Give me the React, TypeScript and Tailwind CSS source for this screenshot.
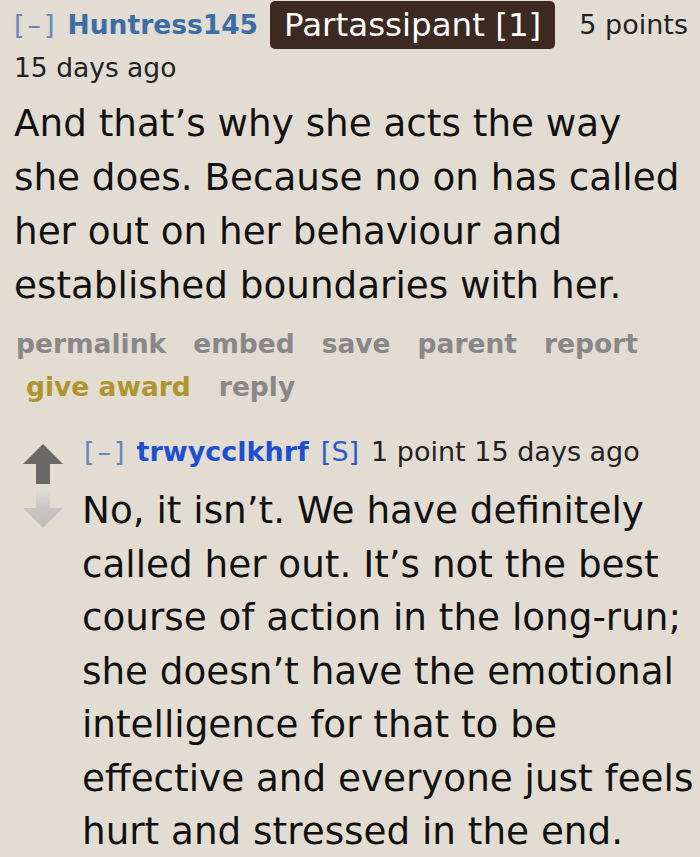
import React from 'react';

const font = { fontFamily: '"DejaVu Sans", "Liberation Sans", sans-serif' };

function UpArrow() {
  return (
    <svg width="42" height="40" viewBox="0 0 42 40">
      <polygon points="21,0 41,20 28,20 28,40 14,40 14,20 1,20" fill="#6b6966" />
    </svg>
  );
}

function DownArrow() {
  return (
    <svg width="42" height="40" viewBox="0 0 42 40">
      <defs>
        <linearGradient id="dg" x1="0" y1="0" x2="0" y2="1">
          <stop offset="0" stopColor="#e0dcd6" />
          <stop offset="0.45" stopColor="#c9c7c5" />
          <stop offset="1" stopColor="#bebcba" />
        </linearGradient>
      </defs>
      <polygon points="14,0 28,0 28,18 41,18 21,38 1,18 14,18" fill="url(#dg)" />
    </svg>
  );
}

export default function App() {
  return (
    <div className="w-[700px] h-[857px] overflow-hidden bg-[#e3dcd3] text-black" style={font}>
      {/* parent comment */}
      <div className="pl-[14px] pt-[1px]">
        <div className="flex items-center h-[48px] text-[27px] whitespace-nowrap">
          <span className="text-[#6389bb] tracking-[3px]">[–]</span>
          <span className="ml-[10px] font-bold text-[#3a6ea5] text-[26.5px]">Huntress145</span>
          <span className="ml-[12px] bg-[#3c2a22] text-white rounded-[5px] h-[48px] px-[14px] flex items-center text-[32.5px]">
            Partassipant [1]
          </span>
          <span className="ml-[24px] text-[#222]">5 points</span>
        </div>
        <div className="text-[26.5px] text-[#222] leading-[36px] mt-[1px]">15 days ago</div>

        <div className="mt-[10px] text-[37.3px] leading-[54px] text-[#111]">
          And that’s why she acts the way
          <br />
          she does. Because no on has called
          <br />
          her out on her behaviour and
          <br />
          established boundaries with her.
        </div>

        <div className="mt-[10px] pl-[2px] text-[26.5px] font-bold text-[#8a8886] leading-[43px]">
          <div className="flex gap-[27px]">
            <span>permalink</span>
            <span>embed</span>
            <span>save</span>
            <span>parent</span>
            <span>report</span>
          </div>
          <div className="flex gap-[28px] pl-[10px]">
            <span className="text-[#ae962d]">give award</span>
            <span>reply</span>
          </div>
        </div>
      </div>

      {/* child comment */}
      <div className="flex mt-[26px] pl-[22px]">
        <div className="flex flex-col w-[42px] gap-[6px] pt-[10px]">
          <UpArrow />
          <DownArrow />
        </div>
        <div className="ml-[18px] flex-1">
          <div className="text-[27px] leading-[36px] whitespace-nowrap pl-[2px]">
            <span className="text-[#6389bb] tracking-[3px]">[–]</span>
            <span className="ml-[9px] font-bold text-[#1f4fd1]">trwycclkhrf</span>
            <span className="ml-[12px] text-[#2a5bc9]">[S]</span>
            <span className="ml-[12px] text-[#222]">1 point 15 days ago</span>
          </div>
          <div className="mt-[14px] text-[37.3px] leading-[53.5px] text-[#111]">
            No, it isn’t. We have definitely
            <br />
            called her out. It’s not the best
            <br />
            course of action in the long-run;
            <br />
            she doesn’t have the emotional
            <br />
            intelligence for that to be
            <br />
            effective and everyone just feels
            <br />
            hurt and stressed in the end.
          </div>
        </div>
      </div>
    </div>
  );
}
